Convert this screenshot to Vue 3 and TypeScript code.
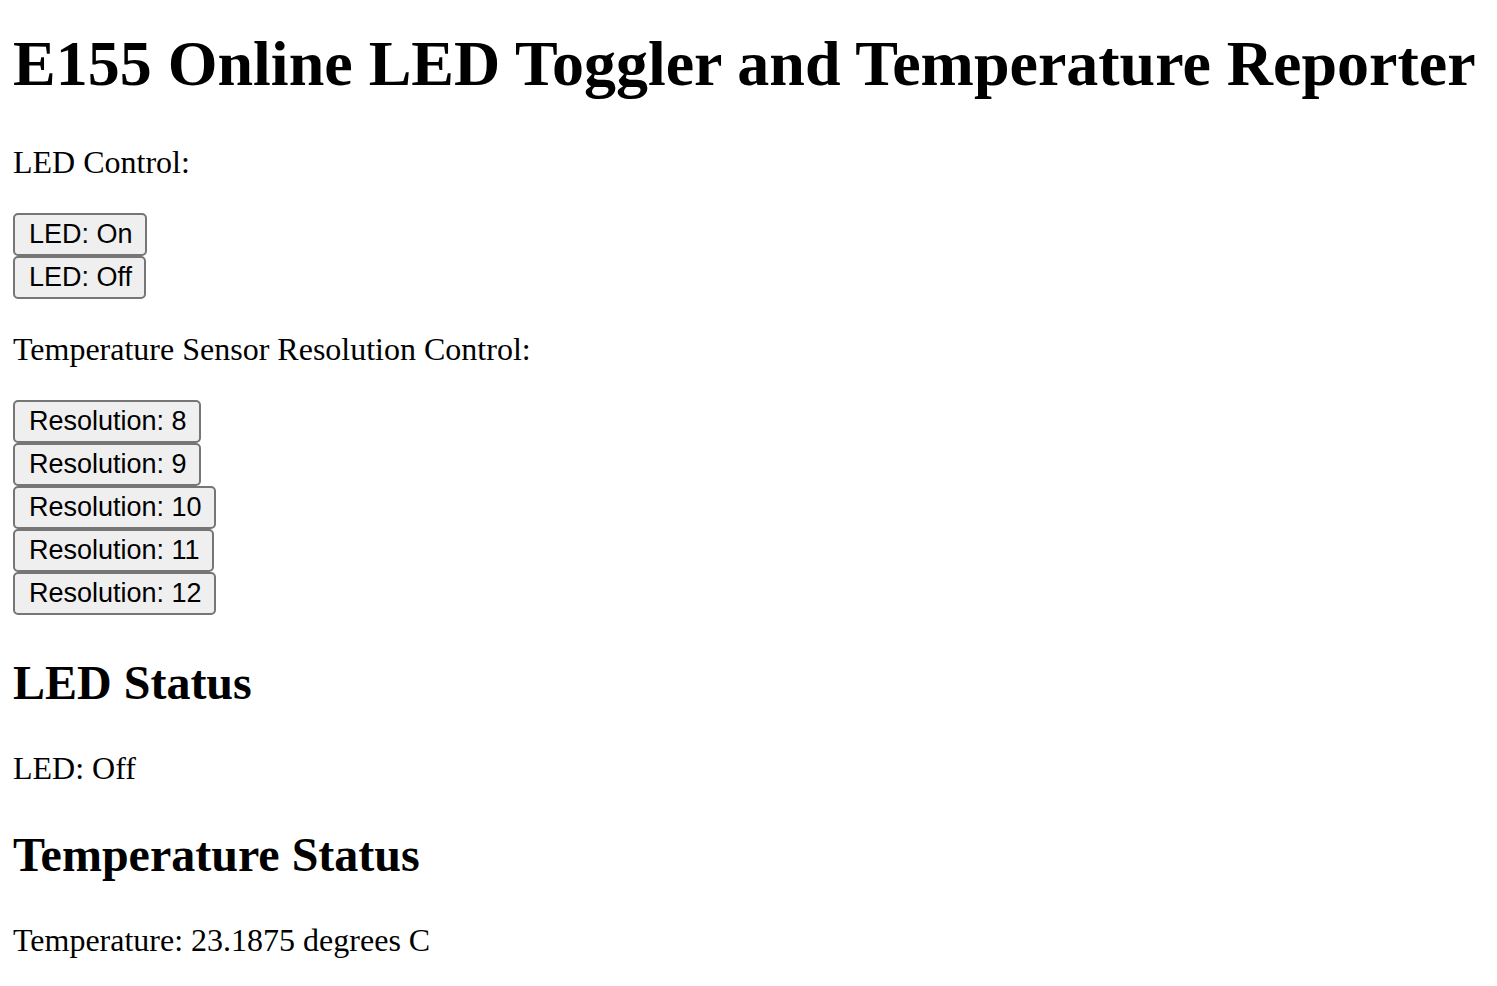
<script setup lang="ts">
import { ref } from 'vue'

const ledStates: string[] = ['On', 'Off']
const resolutions: number[] = [8, 9, 10, 11, 12]
const led = ref<string>('Off')
const resolution = ref<number>(12)
const temperature = ref<string>('23.1875')
</script>

<template>
  <main class="page">
    <h1>E155 Online LED Toggler and Temperature Reporter</h1>

    <p>LED Control:</p>
    <div class="controls">
      <button v-for="state in ledStates" :key="state" type="button" @click="led = state">LED: {{ state }}</button>
    </div>

    <p>Temperature Sensor Resolution Control:</p>
    <div class="controls">
      <button v-for="bits in resolutions" :key="bits" type="button" @click="resolution = bits">Resolution: {{ bits }}</button>
    </div>

    <h2>LED Status</h2>
    <p>LED: {{ led }}</p>

    <h2>Temperature Status</h2>
    <p>Temperature: {{ temperature }} degrees C</p>
  </main>
</template>

<style scoped>
.page {
  padding: 0 13px;
  font-family: "Liberation Serif", "Times New Roman", serif;
  font-size: 32px;
  line-height: 37px;
  color: #000;
}

h1 {
  margin: 0;
  padding-top: 27px;
  font-size: 64px;
  line-height: 74px;
  font-weight: bold;
}

h2 {
  margin: 40px 0;
  font-size: 48px;
  line-height: 55px;
  font-weight: bold;
}

p {
  margin: 32px 0;
}

h1 + p {
  margin-top: 43px;
}

.controls {
  display: flex;
  flex-direction: column;
  align-items: flex-start;
}

button {
  height: 43px;
  margin: 0;
  padding: 0 12px 2px 14px;
  border: 2px solid #767676;
  border-radius: 5px;
  background: #efefef;
  color: #000;
  font-family: "Liberation Sans", Arial, sans-serif;
  font-size: 27px;
  line-height: 36px;
}
</style>

<style>
body {
  margin: 0;
  background: #fff;
}
</style>
